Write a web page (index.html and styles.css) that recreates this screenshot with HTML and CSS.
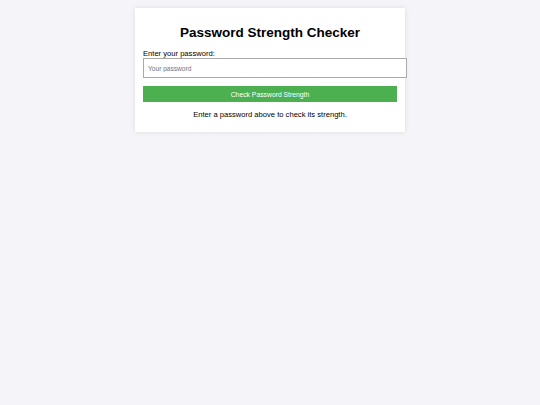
FILE: index.html
```html
<!DOCTYPE html>
<html lang="en">
<head>
    <meta charset="UTF-8">
    <meta name="viewport" content="width=device-width, initial-scale=1.0">
    <title>Password Strength Checker</title>
    <link rel="stylesheet" href="styles.css">
</head>
<body>
    <div class="container">
        <h1>Password Strength Checker</h1>

        <label for="password">Enter your password:</label>
        <input type="password" id="password" placeholder="Your password">

        <button class="check-btn">Check Password Strength</button>

        <div class="result" id="result">Enter a password above to check its strength.</div>
    </div>
</body>
</html>
```

FILE: styles.css
```css
body {
    font-family: 'Liberation Sans', Arial, sans-serif;
    background: #f4f4f9;
    margin: 0;
    padding: 8px 0;
}

.container {
    background: #fff;
    width: 254px;
    margin: 0 auto;
    padding: 8px 8px 13px;
    box-shadow: 0 0 5px rgba(0, 0, 0, 0.1);
}

h1 {
    text-align: center;
    color: #000;
    font-size: 13.5px;
    line-height: 16px;
    margin: 9px 0 9px;
}

label {
    display: block;
    font-size: 7.6px;
    line-height: 8px;
}

input[type="password"] {
    display: block;
    width: 100%;
    height: 18px;
    padding: 0 4px;
    font-size: 6.6px;
    border: 1px solid #aaa;
    margin: 0 0 8px;
    font-family: inherit;
}

.check-btn {
    display: block;
    width: 100%;
    height: 16px;
    padding: 0 4px;
    background: #4caf50;
    color: #fff;
    border: none;
    font-size: 6.8px;
    font-family: inherit;
}

.result {
    text-align: center;
    font-size: 7.6px;
    line-height: 9px;
    margin-top: 8px;
}
```
